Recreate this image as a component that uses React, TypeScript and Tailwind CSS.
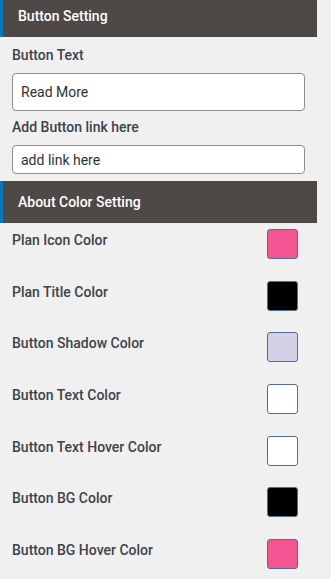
const colorRows = [
  { label: 'Plan Icon Color', color: '#f35592' },
  { label: 'Plan Title Color', color: '#000000' },
  { label: 'Button Shadow Color', color: '#d5cfe8' },
  { label: 'Button Text Color', color: '#ffffff' },
  { label: 'Button Text Hover Color', color: '#ffffff' },
  { label: 'Button BG Color', color: '#000000' },
  { label: 'Button BG Hover Color', color: '#f35592' },
];

function SectionHeader({ title, className }: { title: string; className: string }) {
  return (
    <div className={`flex items-center border-l-[3px] border-[#0a78bd] bg-[#4e4946] pl-[15px] text-[14px] font-medium text-white ${className}`}>
      {title}
    </div>
  );
}

export default function App() {
  return (
    <div className="h-[579px] w-[331px] overflow-hidden bg-[#f0f0f0] font-['Roboto',sans-serif]">
      <div className="w-[317px]">
        <SectionHeader title="Button Setting" className="h-[37px] pb-[5px]" />

        <div className="px-3">
          <div className="mt-2 text-[14px] font-medium leading-5 text-[#3c434a]">Button Text</div>
          <input
            type="text"
            defaultValue="Read More"
            className="mt-2 h-[38px] w-full rounded border border-[#8c8f94] bg-white px-2 text-[14px] text-[#2c3338] outline-none"
          />
          <div className="mt-[6px] text-[14px] font-medium leading-5 text-[#3c434a]">Add Button link here</div>
          <input
            type="text"
            defaultValue="add link here"
            className="mt-2 h-[29px] w-full rounded border border-[#8c8f94] bg-white px-2 text-[14px] text-[#2c3338] outline-none"
          />
        </div>

        <SectionHeader title="About Color Setting" className="mt-[7px] h-[42px]" />

        <div className="mt-[6px] flex flex-col gap-[21.67px] px-3">
          {colorRows.map((row) => (
            <div key={row.label} className="flex items-start justify-between">
              <span className="mt-[1px] text-[14px] font-medium leading-5 text-[#3c434a]">{row.label}</span>
              <div
                className="mr-[7px] h-[30px] w-[31px] rounded-[3px] border border-[#4f6f99]"
                style={{ backgroundColor: row.color }}
              />
            </div>
          ))}
        </div>
      </div>
    </div>
  );
}
